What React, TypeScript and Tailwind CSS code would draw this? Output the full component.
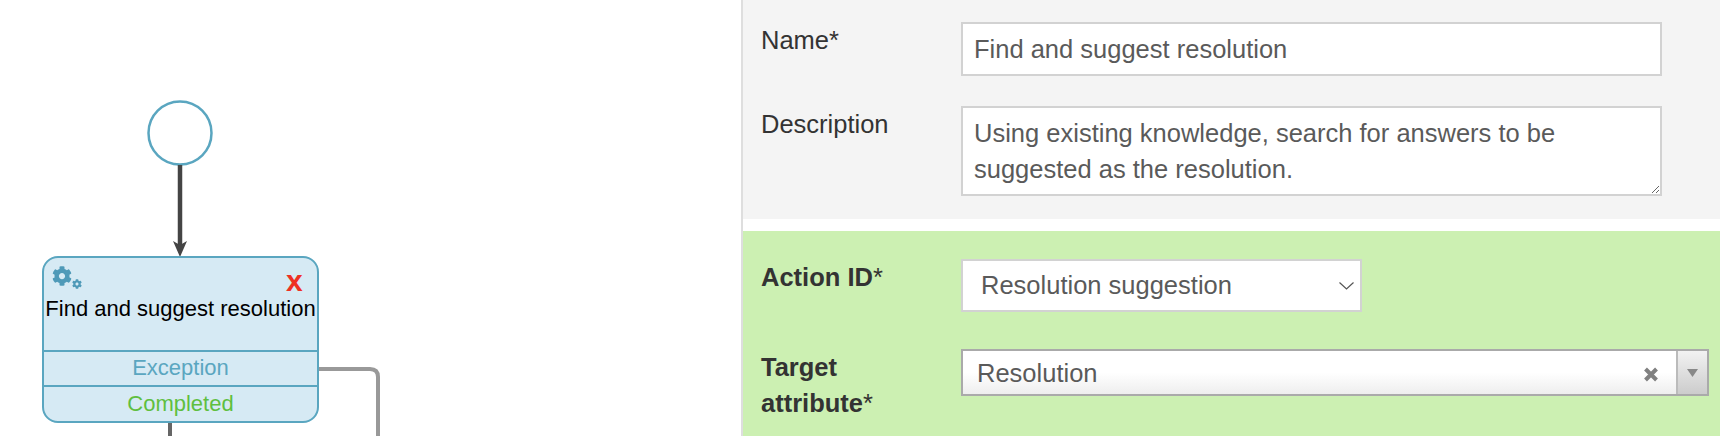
import { FaCog } from "react-icons/fa";

const font = "font-['Liberation_Sans',Arial,sans-serif]";

function Diagram() {
  return (
    <div className="relative h-full w-[741px] shrink-0 bg-white">
      <svg className="absolute left-0 top-0" width="741" height="436" fill="none">
        <circle cx="180" cy="133" r="31.500" fill="#fff" stroke="#5aa6c0" strokeWidth="2.500" />
        <path d="M180 165V245" stroke="#444" strokeWidth="4.500" />
        <path d="M173 241L180 245L187 241L180 257Z" fill="#444" />
        <path d="M319 369H370Q378 369 378 377V436" stroke="#999" strokeWidth="4" />
        <path d="M170 420V436" stroke="#666" strokeWidth="4" />
      </svg>
      <div className="absolute left-[42px] top-[256px] flex h-[167px] w-[277px] flex-col overflow-hidden rounded-[16px] border-[2.500px] border-[#5aa6c0] bg-[#d6eaf4]">
        <div className="relative h-[94px] shrink-0 border-b-2 border-[#5aa6c0]">
          <FaCog className="absolute left-[8px] top-[8px] text-[#4f9ab8]" size={20} />
          <FaCog className="absolute left-[28px] top-[21px] text-[#4f9ab8]" size={10} />
          <span className="absolute left-[242px] top-[6px] text-[30px] font-bold leading-[34px] text-[#ee3124]">x</span>
          <p className="absolute inset-x-0 top-[36px] whitespace-nowrap text-center text-[22px] leading-[30px] text-black">
            Find and suggest resolution
          </p>
        </div>
        <div className="flex h-[35px] shrink-0 items-center justify-center border-b-2 border-[#5aa6c0] pb-[2px] text-[22px] text-[#5aa6c0]">
          Exception
        </div>
        <div className="flex h-[34px] shrink-0 items-center justify-center pb-[2px] text-[22px] text-[#5fbf3f]">
          Completed
        </div>
      </div>
    </div>
  );
}

function Label({ children }: { children: React.ReactNode }) {
  return <div className="w-[200px] shrink-0 text-[25.500px] leading-[36px] text-[#333]">{children}</div>;
}

function StrongLabel({ children }: { children: React.ReactNode }) {
  return (
    <div className="w-[200px] shrink-0 text-[25.500px] leading-[36px] text-[#333]">
      <b>{children}</b>*
    </div>
  );
}

function FormPanel() {
  return (
    <div className="flex h-full min-w-0 flex-1 flex-col border-l-2 border-[#dedede] bg-white">
      <div className="flex h-[219px] shrink-0 flex-col gap-[30px] bg-[#f4f4f4] pl-[18px] pt-[22px]">
        <div className="flex items-start">
          <Label>Name*</Label>
          <input
            readOnly
            value="Find and suggest resolution"
            className="h-[54px] w-[701px] border-2 border-[#d2d2d2] bg-white px-[11px] text-[25.500px] text-[#5a5a5a] outline-none"
          />
        </div>
        <div className="flex items-start">
          <Label>Description</Label>
          <textarea
            readOnly
            value="Using existing knowledge, search for answers to be suggested as the resolution."
            className="h-[90px] w-[701px] border-2 border-[#d2d2d2] bg-white px-[11px] py-[7px] text-[25.500px] leading-[36px] text-[#5a5a5a] outline-none"
          />
        </div>
      </div>
      <div className="mt-[12px] flex flex-1 flex-col gap-[37px] bg-[#ccf0b2] pl-[18px] pt-[28px]">
        <div className="flex items-start">
          <StrongLabel>Action ID</StrongLabel>
          <div className="relative h-[53px] w-[401px]">
            <select className="h-full w-full appearance-none border-2 border-[#d2d2d2] bg-white pl-[18px] text-[25.500px] text-[#5a5a5a] outline-none">
              <option>Resolution suggestion</option>
            </select>
            <svg className="absolute right-[8px] top-[23px]" width="15" height="8" fill="none">
              <path d="M0.500 0.500L7.500 7L14.500 0.500" stroke="#555" strokeWidth="1.200" />
            </svg>
          </div>
        </div>
        <div className="flex items-start">
          <StrongLabel>
            Target
            <br />
            attribute
          </StrongLabel>
          <div className="flex h-[47px] w-[748px] items-stretch border-2 border-[#aaa] bg-gradient-to-b from-white from-50% to-[#eee]">
            <span className="flex-1 pl-[14px] text-[25.500px] leading-[45px] text-[#5a5a5a]">Resolution</span>
            <div className="flex w-[33px] items-center pr-[17px] pt-[3px]">
              <svg className="shrink-0" width="16" height="15" viewBox="0 0 16 15" fill="none">
                <path d="M2.500 2L13.500 13M13.500 2L2.500 13" stroke="#808080" strokeWidth="4" />
              </svg>
            </div>
            <div className="flex w-[31px] items-center justify-center border-l-2 border-[#bbb] bg-gradient-to-b from-[#f2f2f2] to-[#ccc]">
              <svg width="11" height="8" viewBox="0 0 11 8">
                <path d="M0 0H11L5.500 8Z" fill="#888" />
              </svg>
            </div>
          </div>
        </div>
      </div>
    </div>
  );
}

export default function App() {
  return (
    <div className={`flex h-[436px] w-[1720px] overflow-hidden bg-white ${font}`}>
      <Diagram />
      <FormPanel />
    </div>
  );
}
